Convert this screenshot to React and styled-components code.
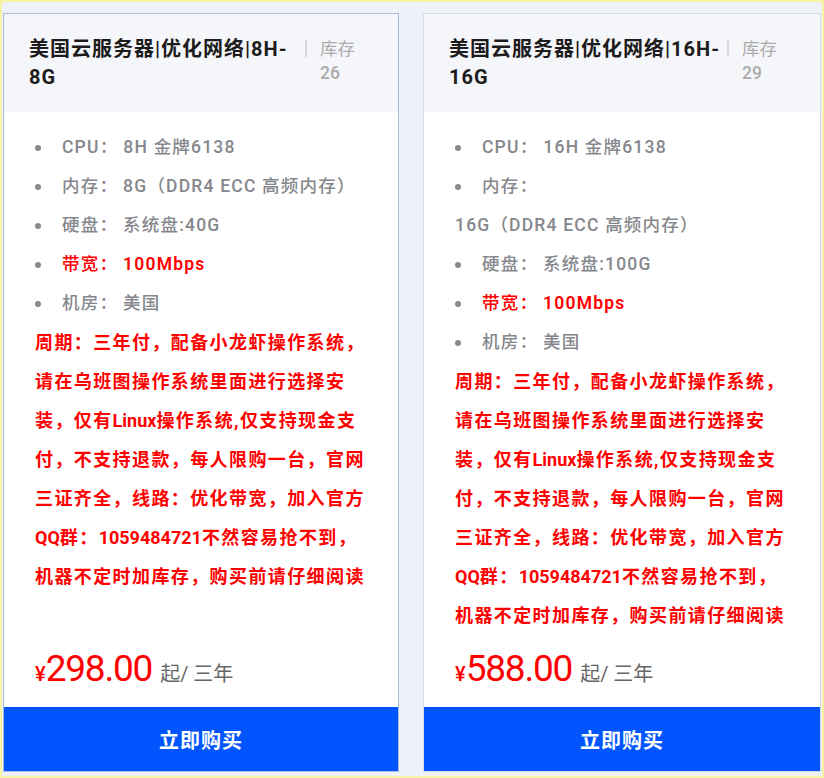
import React from 'react';
import styled, { createGlobalStyle } from 'styled-components';

const Global = createGlobalStyle`
  html, body { margin: 0; padding: 0; background: #eef1f7; }
  body { font-family: Roboto, "Noto Sans CJK SC", sans-serif; }
  * { box-sizing: border-box; }
`;

const Frame = styled.div`
  height: 778px;
  border: 2px solid #f7f3a6;
  padding: 11px 0 4px 1px;
  display: grid;
  grid-template-columns: 396px 398px;
  column-gap: 24px;
`;

const Card = styled.div`
  display: flex;
  flex-direction: column;
  background: #fff;
  border: 1px solid ${(p) => (p.$active ? '#a9bcdf' : '#d9dce3')};
  overflow: hidden;
`;

const Head = styled.div`
  display: flex;
  align-items: flex-start;
  background: #f5f6f9;
  padding: 21px 25px;
`;

const Title = styled.h3`
  flex: 1;
  min-width: 0;
  margin: 0;
  font-size: 20px;
  line-height: 28px;
  font-weight: 700;
  letter-spacing: 1px;
  color: #1c1c1c;
`;

const Stock = styled.div`
  flex: 0 0 68px;
  display: flex;
  align-items: flex-start;
`;

const Divider = styled.span`
  width: 2px;
  height: 17px;
  margin-top: 5px;
  margin-right: 13px;
  background: #d8d8d8;
`;

const StockText = styled.div`
  margin-top: 2px;
  font-size: 17.5px;
  line-height: 24px;
  color: #ababab;
`;

const StockNum = styled.div`
  font-weight: 500;
`;

const Body = styled.div`
  flex: 1;
  min-height: 0;
  display: flex;
  flex-direction: column;
  padding: 16px 31px 0;
`;

const Specs = styled.ul`
  list-style: none;
  margin: 0;
  padding: 0;
`;

const Spec = styled.li`
  font-size: 17.5px;
  line-height: 39px;
  letter-spacing: 1.2px;
  font-weight: 500;
  color: ${(p) => (p.$hot ? '#f00' : '#85878c')};
  &::before {
    content: '';
    display: inline-block;
    width: 6px;
    height: 6px;
    border-radius: 50%;
    background: #8a8a8a;
    vertical-align: middle;
    margin-right: 21px;
  }
`;

const Label = styled.span`
  margin-right: 5px;
`;

const Value = styled.span`
  display: ${(p) => (p.$block ? 'block' : 'inline')};
  font-weight: ${(p) => (p.$hot ? 600 : 500)};
`;

const Notice = styled.p`
  margin: 0;
  color: #f00;
  font-size: 18px;
  font-weight: 700;
  line-height: 39px;
  letter-spacing: 1.4px;
`;

const Latin = styled.span`
  letter-spacing: 0;
`;

const PriceRow = styled.div`
  margin-top: auto;
  display: flex;
  align-items: baseline;
  padding-bottom: 13px;
  color: #f00;
`;

const Currency = styled.span`
  font-size: 20px;
  font-weight: 500;
`;

const Amount = styled.span`
  font-size: 37px;
  line-height: 50px;
  letter-spacing: -1.2px;
`;

const Unit = styled.span`
  margin-left: 8px;
  font-size: 20px;
  color: #666;
`;

const BuyButton = styled.button`
  display: block;
  flex: 0 0 64px;
  width: 100%;
  height: 64px;
  border: 0;
  padding: 0;
  background: #0055ff;
  color: #fff;
  font-family: Roboto, "Noto Sans CJK SC", sans-serif;
  font-size: 20px;
  font-weight: 700;
  letter-spacing: 1px;
  cursor: pointer;
`;

const notice = [
  '周期：三年付，配备小龙虾操作系统，请在乌班图操作系统里面进行选择安装，仅有',
  { latin: 'Linux' },
  '操作系统,仅支持现金支付，不支持退款，每人限购一台，官网三证齐全，线路：优化带宽，加入官方',
  { latin: 'QQ' },
  '群：',
  { latin: '1059484721' },
  '不然容易抢不到，机器不定时加库存，购买前请仔细阅读',
];

const products = [
  {
    name: ['美国云服务器|优化网络|8H-', '8G'],
    stock: 26,
    cpu: '8H 金牌6138',
    mem: '8G（DDR4 ECC 高频内存）',
    disk: '系统盘:40G',
    price: '298.00',
    active: true,
  },
  {
    name: ['美国云服务器|优化网络|16H-', '16G'],
    stock: 29,
    cpu: '16H 金牌6138',
    mem: '16G（DDR4 ECC 高频内存）',
    memBlock: true,
    disk: '系统盘:100G',
    price: '588.00',
  },
];

function ProductCard({ p }) {
  return (
    <Card $active={p.active}>
      <Head>
        <Title>
          {p.name[0]}
          <wbr />
          {p.name[1]}
        </Title>
        <Stock>
          <Divider />
          <StockText>
            库存
            <StockNum>{p.stock}</StockNum>
          </StockText>
        </Stock>
      </Head>
      <Body>
        <Specs>
          <Spec>
            <Label>CPU：</Label>
            <Value>{p.cpu}</Value>
          </Spec>
          <Spec>
            <Label>内存：</Label>
            <Value $block={p.memBlock}>{p.mem}</Value>
          </Spec>
          <Spec>
            <Label>硬盘：</Label>
            <Value>{p.disk}</Value>
          </Spec>
          <Spec $hot>
            <Label>带宽：</Label>
            <Value $hot>100Mbps</Value>
          </Spec>
          <Spec>
            <Label>机房：</Label>
            <Value>美国</Value>
          </Spec>
        </Specs>
        <Notice>
          {notice.map((seg, i) =>
            typeof seg === 'string' ? seg : <Latin key={i}>{seg.latin}</Latin>
          )}
        </Notice>
        <PriceRow>
          <Currency>¥</Currency>
          <Amount>{p.price}</Amount>
          <Unit>起/ 三年</Unit>
        </PriceRow>
      </Body>
      <BuyButton>立即购买</BuyButton>
    </Card>
  );
}

export default function App() {
  return (
    <>
      <Global />
      <Frame>
        {products.map((p) => (
          <ProductCard key={p.stock} p={p} />
        ))}
      </Frame>
    </>
  );
}
